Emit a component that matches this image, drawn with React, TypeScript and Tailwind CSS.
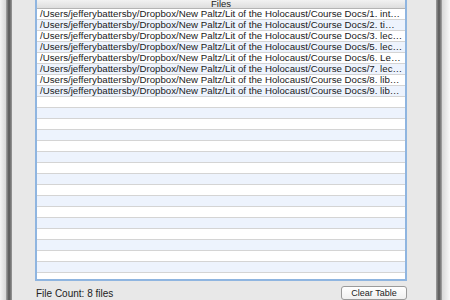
import React from "react";

const files = [
  "1. int…",
  "2. ti…",
  "3. lec…",
  "5. lec…",
  "6. Le…",
  "7. lec…",
  "8. lib…",
  "9. lib…",
];

const prefix = "/Users/jefferybattersby/Dropbox/New Paltz/Lit of the Holocaust/Course Docs/";

export default function App() {
  const rows = Array.from({ length: 25 }, (_, i) => i);
  return (
    <div
      className="w-[450px] h-[300px] bg-white overflow-hidden flex"
      style={{ fontFamily: '"Liberation Sans", Arial, sans-serif' }}
    >
      <div className="w-[6px] h-full bg-gradient-to-r from-[#f4f4f4] to-[#d8d8d8]" />
      <div className="w-[6px] h-full bg-gradient-to-r from-[#a8a8a8] via-[#555555] to-[#9a9a9a]" />
      <div className="w-[424px] h-full bg-[#e8e8e8] flex flex-col pl-[23px] pr-[29px]">
        <div className="h-[285px] w-[372px] border-2 border-t-0 border-[#8fb5e0] bg-white flex flex-col overflow-hidden">
          <div className="h-[9px] shrink-0 bg-gradient-to-b from-[#f2f2f2] to-[#dedede] border-b border-[#b4b4b4] flex items-end justify-center">
            <span className="text-[9.5px] leading-[10px] text-[#222] -mb-[1px]">Files</span>
          </div>
          {rows.map((i) => (
            <div
              key={i}
              className={
                "h-[11px] shrink-0 border-b border-[#d4d4d4] flex items-center pl-[3px] " +
                (i % 2 === 0 ? "bg-white" : "bg-[#edf3fd]")
              }
            >
              {i < files.length && (
                <span className="text-[9.7px] leading-[10px] text-[#1a1a1a] whitespace-nowrap">
                  {prefix + files[i]}
                </span>
              )}
            </div>
          ))}
        </div>
        <div className="flex justify-between items-start pt-[8px]">
          <span className="text-[10px] leading-[10px] text-[#222] pl-[1px]">File Count: 8 files</span>
          <div className="w-[66px] h-[14px] bg-gradient-to-b from-white to-[#f0f0f0] border border-[#9a9a9a] rounded-[3px] -mt-[3px] flex justify-center pt-[2px]">
            <span className="text-[9px] leading-[9px] text-[#222]">Clear Table</span>
          </div>
        </div>
      </div>
      <div className="w-[6px] h-full bg-gradient-to-r from-[#a0a0a0] via-[#555555] to-[#a8a8a8]" />
      <div className="flex-1 h-full bg-gradient-to-r from-[#d8d8d8] to-[#f8f8f8]" />
    </div>
  );
}
